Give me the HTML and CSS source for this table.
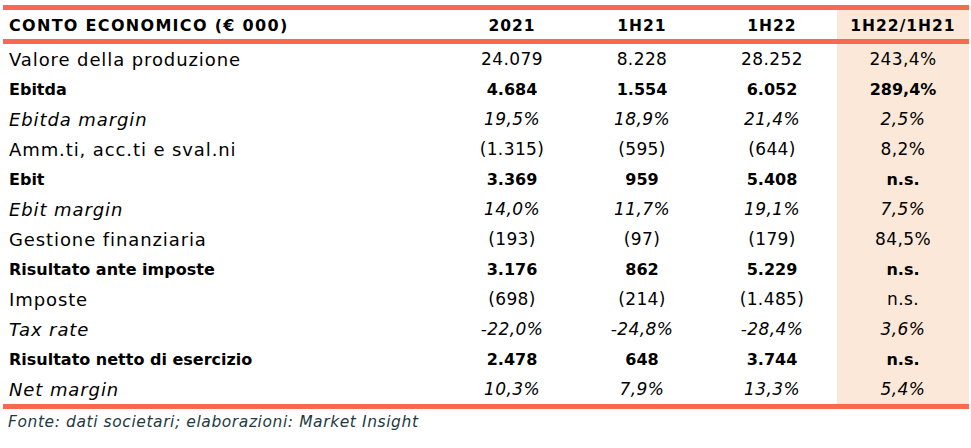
FILE: index.html
```html
<!DOCTYPE html>
<html lang="it">
<head>
<meta charset="utf-8">
<title>Conto economico</title>
<link rel="stylesheet" href="styles.css">
</head>
<body>
<table class="ce">
  <thead>
    <tr>
      <th class="lbl">CONTO ECONOMICO (€ 000)</th>
      <th>2021</th>
      <th>1H21</th>
      <th>1H22</th>
      <th class="hl">1H22/1H21</th>
    </tr>
  </thead>
  <tbody>
    <tr><td class="lbl">Valore della produzione</td><td>24.079</td><td>8.228</td><td>28.252</td><td class="hl">243,4%</td></tr>
    <tr class="b"><td class="lbl">Ebitda</td><td>4.684</td><td>1.554</td><td>6.052</td><td class="hl">289,4%</td></tr>
    <tr class="i"><td class="lbl">Ebitda margin</td><td>19,5%</td><td>18,9%</td><td>21,4%</td><td class="hl">2,5%</td></tr>
    <tr><td class="lbl">Amm.ti, acc.ti e sval.ni</td><td>(1.315)</td><td>(595)</td><td>(644)</td><td class="hl">8,2%</td></tr>
    <tr class="b"><td class="lbl">Ebit</td><td>3.369</td><td>959</td><td>5.408</td><td class="hl">n.s.</td></tr>
    <tr class="i"><td class="lbl">Ebit margin</td><td>14,0%</td><td>11,7%</td><td>19,1%</td><td class="hl">7,5%</td></tr>
    <tr><td class="lbl">Gestione finanziaria</td><td>(193)</td><td>(97)</td><td>(179)</td><td class="hl">84,5%</td></tr>
    <tr class="b"><td class="lbl">Risultato ante imposte</td><td>3.176</td><td>862</td><td>5.229</td><td class="hl">n.s.</td></tr>
    <tr><td class="lbl">Imposte</td><td>(698)</td><td>(214)</td><td>(1.485)</td><td class="hl">n.s.</td></tr>
    <tr class="i"><td class="lbl">Tax rate</td><td>-22,0%</td><td>-24,8%</td><td>-28,4%</td><td class="hl">3,6%</td></tr>
    <tr class="b"><td class="lbl">Risultato netto di esercizio</td><td>2.478</td><td>648</td><td>3.744</td><td class="hl">n.s.</td></tr>
    <tr class="i last"><td class="lbl">Net margin</td><td>10,3%</td><td>7,9%</td><td>13,3%</td><td class="hl">5,4%</td></tr>
  </tbody>
</table>
<p class="fonte">Fonte: dati societari; elaborazioni: Market Insight</p>
</body>
</html>
```
FILE: styles.css
```css
html, body {
  margin: 0;
  padding: 0;
  background: #ffffff;
}

body {
  font-family: "DejaVu Sans", sans-serif;
  color: #000000;
}

.ce {
  margin: 5px 2px 0 3px;
  width: 966px;
  border-collapse: collapse;
  table-layout: fixed;
  font-size: 17px;
  letter-spacing: 0.4px;
}

.ce th,
.ce td {
  padding: 0;
  text-align: center;
  white-space: nowrap;
  width: 130px;
}

.ce .lbl {
  width: 438px;
  text-align: left;
  padding-left: 6px;
}

.ce tbody td.lbl {
  font-size: 18px;
  letter-spacing: 0.9px;
}

.ce .hl {
  width: 132px;
  background: #fce8d8;
}

.ce thead th {
  height: 27px;
  padding-top: 2px;
  border-top: 5px solid #f8694f;
  border-bottom: 5px solid #f8694f;
  font-weight: bold;
  font-size: 15.5px;
  letter-spacing: 1px;
}

.ce thead th.lbl {
  font-size: 16px;
  letter-spacing: 1.3px;
}

.ce tbody td {
  height: 30px;
}

.ce tr.b td,
.ce tbody tr.b td.lbl {
  font-weight: bold;
  font-size: 16px;
  letter-spacing: 0;
}

.ce tr.i td {
  font-style: italic;
}

.ce tr.last td {
  border-bottom: 5px solid #f8694f;
}

.fonte {
  margin: 4px 0 0 8px;
  font-size: 15.5px;
  letter-spacing: 0.58px;
  font-style: italic;
  color: #1d3a40;
}
```
